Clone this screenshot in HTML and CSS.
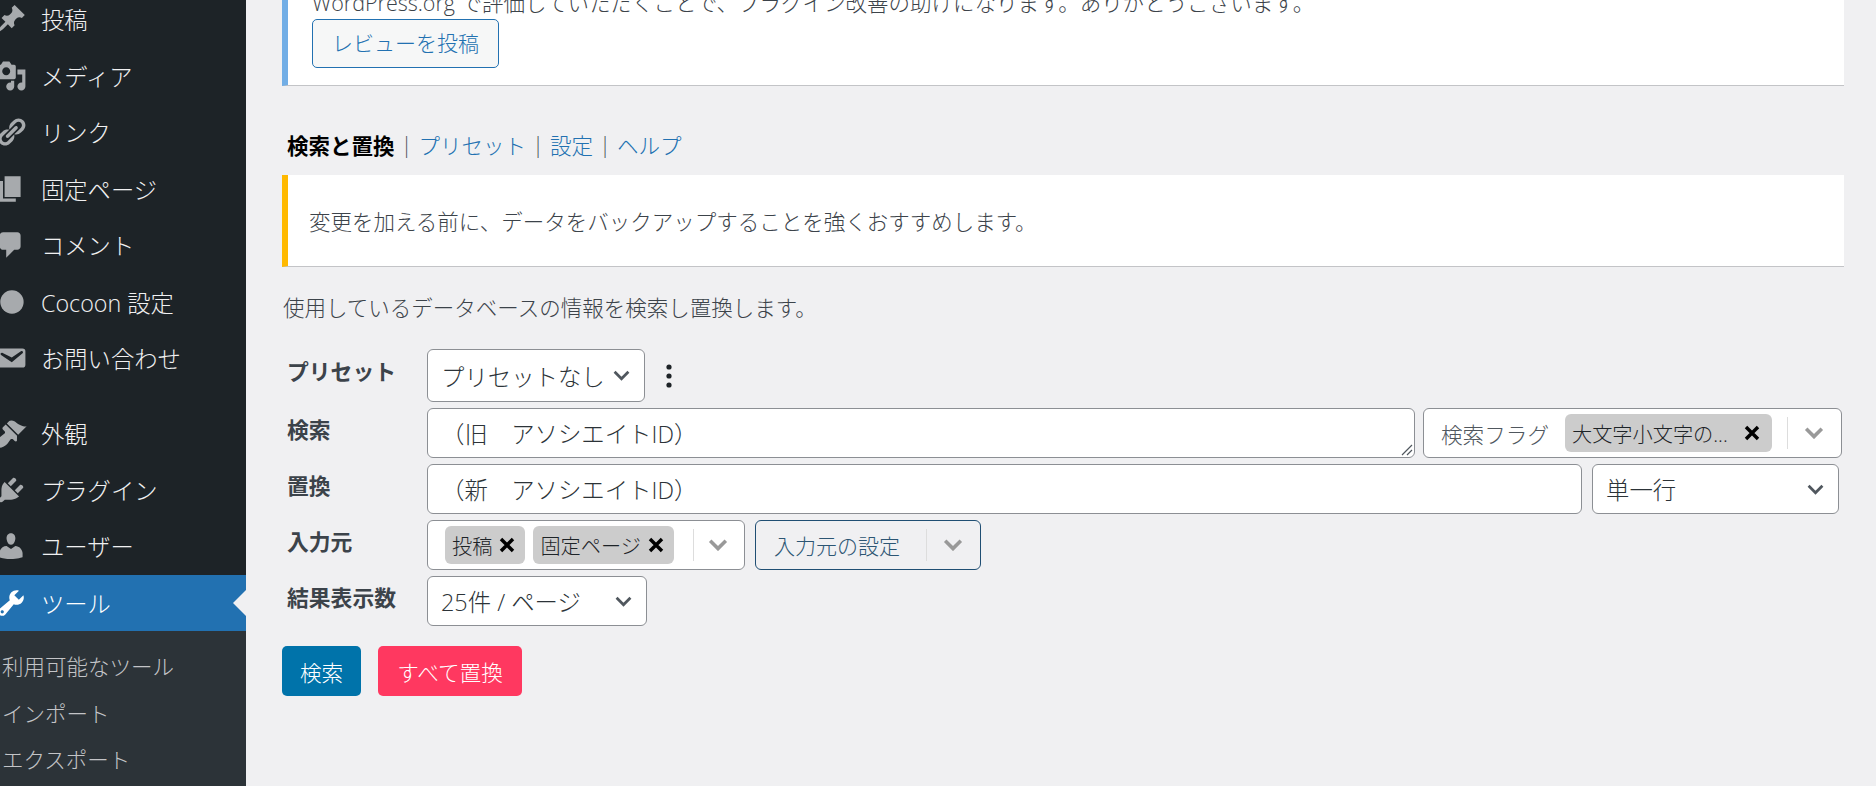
FILE: index.html
```html
<!DOCTYPE html>
<html lang="ja">
<head>
    <meta charset="UTF-8">
    <title>検索と置換</title>
    <link rel="stylesheet" href="styles.css">
</head>
<body>
    <div class="page">
        <nav class="sidebar">
            <ul class="menu">
                <li class="menu-item"><svg class="menu-icon" viewBox="0 0 20 20"><path d="M10.44 3.02l1.82-1.82 6.36 6.35-1.83 1.82c-1.05-.68-2.48-.57-3.41.36l-.75.75c-.92.93-1.04 2.35-.35 3.41l-1.83 1.82-2.41-2.41-2.8 2.79c-.42.42-3.38 2.71-3.8 2.29s1.86-3.39 2.28-3.81l2.79-2.79L4.1 9.36l1.83-1.82c1.05.69 2.48.57 3.4-.36l.75-.75c.93-.92 1.05-2.35.36-3.41z"/></svg>投稿</li>
                <li class="menu-item"><svg class="menu-icon" viewBox="0 0 20 20"><path d="M13 11V4c0-.55-.45-1-1-1h-1.67L9 1H5L3.67 3H2c-.55 0-1 .45-1 1v7c0 .55.45 1 1 1h10c.55 0 1-.45 1-1zM7 4.5c1.38 0 2.5 1.12 2.5 2.5S8.38 9.5 7 9.5 4.5 8.38 4.5 7 5.62 4.5 7 4.5zM14 6h5v10.5c0 1.38-1.12 2.5-2.5 2.5S14 17.88 14 16.5s1.12-2.5 2.5-2.5c.17 0 .34.02.5.05V9h-3V6zm-4 8.05V13h2v3.5c0 1.38-1.12 2.5-2.5 2.5S7 17.88 7 16.5 8.12 14 9.5 14c.17 0 .34.02.5.05z"/></svg>メディア</li>
                <li class="menu-item"><svg class="menu-icon" viewBox="0 0 20 20"><path d="M17.74 2.76c1.68 1.69 1.68 4.41 0 6.1l-1.53 1.52c-1.12 1.12-2.7 1.47-4.14 1.09l2.62-2.61.76-.77.76-.76c.84-.84.84-2.2 0-3.04-.84-.85-2.2-.85-3.04 0l-.77.76-3.38 3.38c-.37-1.44-.02-3.02 1.1-4.14l1.52-1.53c1.69-1.68 4.42-1.68 6.1 0zM8.59 13.43l5.34-5.34c.42-.42.42-1.1 0-1.52-.44-.43-1.13-.39-1.53 0l-5.33 5.34c-.42.42-.42 1.1 0 1.52.44.43 1.13.39 1.52 0zm-.76 2.29l4.14-4.15c.38 1.44.03 3.02-1.09 4.14l-1.52 1.53c-1.69 1.68-4.41 1.68-6.1 0-1.68-1.68-1.68-4.42 0-6.1l1.53-1.52c1.12-1.12 2.7-1.47 4.14-1.1l-4.14 4.15c-.85.84-.85 2.2 0 3.05.84.84 2.2.84 3.04 0z"/></svg>リンク</li>
                <li class="menu-item"><svg class="menu-icon" viewBox="0 0 20 20"><path d="M6 15V2h10v13H6zm-1 1h8v2H3V5h2v11z"/></svg>固定ページ</li>
                <li class="menu-item"><svg class="menu-icon" viewBox="0 0 20 20"><path d="M5 2h9c1.1 0 2 .9 2 2v7c0 1.1-.9 2-2 2h-2l-5 5v-5H5c-1.1 0-2-.9-2-2V4c0-1.1.9-2 2-2z"/></svg>コメント</li>
                <li class="menu-item"><svg class="menu-icon" viewBox="0 0 20 20"><circle cx="10.6" cy="10" r="7.3"/></svg>Cocoon 設定</li>
                <li class="menu-item"><svg class="menu-icon" viewBox="0 0 20 20"><path d="M3.87 4h13.25C18.37 4 19 4.59 19 5.79v8.42c0 1.19-.63 1.79-1.88 1.79H3.87c-1.25 0-1.88-.6-1.88-1.79V5.79c0-1.2.63-1.79 1.88-1.79zm6.62 8.6l6.74-5.53c.24-.2.43-.66.13-1.07-.29-.41-.82-.42-1.17-.17l-5.7 3.86L4.8 6.83c-.35-.25-.88-.24-1.17.17-.3.41-.11.87.13 1.07z"/></svg>お問い合わせ</li>
                <li class="menu-item menu-sep"><svg class="menu-icon" viewBox="0 0 20 20"><path d="M14.48 11.06L7.41 3.99l1.5-1.5c.5-.56 2.3-.47 3.51.32 1.21.8 1.43 1.28 2.91 2.1 1.18.64 2.45 1.26 4.45.85zm-.71.71L6.7 4.7 4.93 6.47c-.39.39-.39 1.02 0 1.41l1.06 1.06c.39.39.39 1.03 0 1.42-.6.6-1.43 1.11-2.21 1.69-.35.26-.7.53-1.01.84-1.34 1.34-2.02 3.35-2.02 4.51 0 1.16.93 2 2.03 1.82 1.16 0 3.17-.68 4.51-2.02.31-.31.58-.66.84-1.01.58-.78 1.09-1.61 1.69-2.21.39-.39 1.03-.39 1.42 0l1.06 1.06c.39.39 1.02.39 1.41 0z"/></svg>外観</li>
                <li class="menu-item"><svg class="menu-icon" viewBox="0 0 20 20"><path d="M13.11 4.36L9.87 7.6 8 5.73l3.24-3.24c.35-.34 1.05-.2 1.56.32.52.51.66 1.21.31 1.55zm-8 1.77l.91-1.12 9.01 9.01-1.19.84c-.71.71-2.63 1.16-3.82 1.16H6.14L4.9 17.26c-.59.59-1.54.59-2.12 0-.59-.58-.59-1.53 0-2.12l1.24-1.24v-3.88c0-1.13.4-3.19 1.09-3.89zm7.26 3.97l3.24-3.24c.34-.35 1.04-.21 1.55.31.52.51.66 1.21.31 1.55l-3.24 3.25z"/></svg>プラグイン</li>
                <li class="menu-item"><svg class="menu-icon" viewBox="0 0 20 20"><path d="M10 9.25c-2.27 0-2.73-3.44-2.73-3.44C7 4.02 7.82 2 9.97 2c2.16 0 2.98 2.02 2.71 3.81 0 0-.41 3.44-2.68 3.44zm0 2.57L12.72 10c2.39 0 4.52 2.33 4.52 4.53v2.49s-3.65 1.13-7.24 1.13c-3.65 0-7.24-1.13-7.24-1.13v-2.49c0-2.25 1.94-4.48 4.47-4.48z"/></svg>ユーザー</li>
                <li class="menu-item menu-item-active"><svg class="menu-icon" viewBox="0 0 20 20"><path d="M16.68 9.77c-1.34 1.34-3.3 1.67-4.95.99l-5.41 6.52c-.99.99-2.59.99-3.58 0s-.99-2.59 0-3.57l6.52-5.42c-.68-1.65-.35-3.61.99-4.95 1.28-1.28 3.12-1.62 4.72-1.06l-2.89 2.89 2.82 2.82 2.86-2.87c.53 1.58.18 3.39-1.08 4.65zM3.81 16.21c.4.39 1.04.39 1.43 0 .4-.4.4-1.04 0-1.43-.39-.4-1.03-.4-1.43 0-.39.39-.39 1.03 0 1.43z"/></svg>ツール</li>
            </ul>
            <ul class="submenu">
                <li>利用可能なツール</li>
                <li>インポート</li>
                <li>エクスポート</li>
            </ul>
        </nav>

        <main class="content">
            <div class="notice notice-review">
                <p class="notice-line">WordPress.org で評価していただくことで、プラグイン改善の助けになります。ありがとうございます。</p>
                <a class="review-button">レビューを投稿</a>
            </div>

            <div class="tabs">
                <strong class="tab-current">検索と置換</strong>
                <span class="tab-sep">|</span>
                <a class="tab-link">プリセット</a>
                <span class="tab-sep">|</span>
                <a class="tab-link">設定</a>
                <span class="tab-sep">|</span>
                <a class="tab-link">ヘルプ</a>
            </div>

            <div class="notice notice-warning">
                <p>変更を加える前に、データをバックアップすることを強くおすすめします。</p>
            </div>

            <p class="description">使用しているデータベースの情報を検索し置換します。</p>

            <div class="form">
                <div class="form-row row-preset">
                    <div class="form-label">プリセット</div>
                    <div class="field select select-preset">
                        <span class="field-text">プリセットなし</span>
                        <svg class="chevron" viewBox="0 0 16 10"><path d="M1.5 1.5L8 8l6.5-6.5"/></svg>
                    </div>
                    <svg class="dots" viewBox="0 0 6 24"><circle cx="3" cy="3" r="2.6"/><circle cx="3" cy="12" r="2.6"/><circle cx="3" cy="21" r="2.6"/></svg>
                </div>

                <div class="form-row">
                    <div class="form-label">検索</div>
                    <div class="field field-grow">
                        <span class="field-text">（旧　アソシエイトID）</span>
                        <svg class="grip" viewBox="0 0 14 14"><path d="M13 3L3 13M13 8l-5 5"/></svg>
                    </div>
                    <div class="field multi multi-flags">
                        <span class="multi-label">検索フラグ</span>
                        <span class="tag tag-wide"><span class="tag-text">大文字小文字の...</span><svg class="tag-x" viewBox="0 0 12 12"><path d="M1.5 1.5l9 9M10.5 1.5l-9 9"/></svg></span>
                        <span class="multi-divider"></span>
                        <svg class="chevron chevron-grey" viewBox="0 0 16 10"><path d="M1.5 1.5L8 8l6.5-6.5"/></svg>
                    </div>
                </div>

                <div class="form-row">
                    <div class="form-label">置換</div>
                    <div class="field field-grow">
                        <span class="field-text">（新　アソシエイトID）</span>
                    </div>
                    <div class="field select select-mode">
                        <span class="field-text">単一行</span>
                        <svg class="chevron" viewBox="0 0 16 10"><path d="M1.5 1.5L8 8l6.5-6.5"/></svg>
                    </div>
                </div>

                <div class="form-row">
                    <div class="form-label">入力元</div>
                    <div class="field multi multi-source">
                        <span class="tag"><span class="tag-text">投稿</span><svg class="tag-x" viewBox="0 0 12 12"><path d="M1.5 1.5l9 9M10.5 1.5l-9 9"/></svg></span>
                        <span class="tag"><span class="tag-text">固定ページ</span><svg class="tag-x" viewBox="0 0 12 12"><path d="M1.5 1.5l9 9M10.5 1.5l-9 9"/></svg></span>
                        <span class="multi-divider"></span>
                        <svg class="chevron chevron-grey" viewBox="0 0 16 10"><path d="M1.5 1.5L8 8l6.5-6.5"/></svg>
                    </div>
                    <div class="field multi multi-settings">
                        <span class="multi-label">入力元の設定</span>
                        <span class="multi-divider"></span>
                        <svg class="chevron chevron-grey" viewBox="0 0 16 10"><path d="M1.5 1.5L8 8l6.5-6.5"/></svg>
                    </div>
                </div>

                <div class="form-row">
                    <div class="form-label">結果表示数</div>
                    <div class="field select select-perpage">
                        <span class="field-text">25件 / ページ</span>
                        <svg class="chevron" viewBox="0 0 16 10"><path d="M1.5 1.5L8 8l6.5-6.5"/></svg>
                    </div>
                </div>
            </div>

            <div class="actions">
                <button class="btn btn-search">検索</button>
                <button class="btn btn-replace">すべて置換</button>
            </div>
        </main>
    </div>
</body>
</html>
```

FILE: styles.css
```css
html, body {
    margin: 0;
    height: 100%;
    overflow: hidden;
}
body {
    font-family: "Open Sans", "Noto Sans CJK JP", sans-serif;
    font-size: 21.5px;
    font-weight: 300;
    color: #3c434a;
    background-color: #f0f0f2;
}
p {
    margin: 0;
}
ul {
    margin: 0;
    padding: 0;
    list-style: none;
}
.page {
    display: flex;
    height: 786px;
    overflow: hidden;
}

/* sidebar */
.sidebar {
    width: 246px;
    flex: none;
    background-color: #1d2327;
    overflow: hidden;
}
.menu {
    margin-top: -9px;
}
.menu-item {
    position: relative;
    display: flex;
    align-items: center;
    gap: 14px;
    height: 56.5px;
    margin-left: -5px;
    font-size: 23.3px;
    color: #f0f0f1;
}
.menu-sep {
    margin-top: 18.5px;
}
.menu-icon {
    width: 32px;
    height: 32px;
    flex: none;
    fill: #a7aaad;
}
.menu-item-active {
    margin-left: 0;
    background-color: #2271b1;
    color: #fff;
}
.menu-item-active .menu-icon {
    margin-left: -5px;
    fill: #fff;
}
.menu-item-active::after {
    content: "";
    position: absolute;
    right: 0;
    top: 15px;
    border-style: solid;
    border-width: 13px 13px 13px 0;
    border-color: transparent #f0f0f2 transparent transparent;
}
.submenu {
    height: 200px;
    padding-top: 13px;
    padding-left: 2px;
    background-color: #2c3338;
    color: #c3c4c7;
}
.submenu li {
    height: 46.5px;
    line-height: 46.5px;
    white-space: nowrap;
}

/* main */
.content {
    flex: 1;
    min-width: 0;
    padding: 0 32px 0 36px;
}
.notice {
    background-color: #fff;
    border-left: 6px solid #72aee6;
    border-bottom: 1px solid #c3c4c7;
}
.notice-review {
    margin-top: -13px;
    padding: 0 24px 17px;
}
.notice-line {
    height: 32px;
    line-height: 32px;
    white-space: nowrap;
}
.review-button {
    display: inline-block;
    box-sizing: border-box;
    height: 49px;
    line-height: 46px;
    padding: 0 19px;
    font-size: 21px;
    color: #2271b1;
    background-color: #f6f7f7;
    border: 1.5px solid #2271b1;
    border-radius: 5px;
}
.tabs {
    display: flex;
    align-items: center;
    height: 34px;
    margin-top: 41px;
    margin-bottom: 14px;
    padding-left: 5px;
}
.tab-current {
    font-weight: 700;
    color: #000;
}
.tab-sep {
    width: 24px;
    text-align: center;
    color: #50575e;
}
.tab-link {
    color: #2271b1;
}
.notice-warning {
    display: flex;
    align-items: center;
    box-sizing: border-box;
    height: 92px;
    padding: 0 21px;
    border-left-color: #ffb900;
}
.description {
    height: 34px;
    line-height: 34px;
    margin-top: 24px;
    margin-bottom: 24px;
    padding-left: 1px;
}

/* form */
.form {
    display: flex;
    flex-direction: column;
    gap: 6px;
}
.form-row {
    display: flex;
    align-items: center;
    gap: 8px;
    height: 50px;
}
.row-preset {
    height: 53px;
}
.form-label {
    width: 135px;
    flex: none;
    margin-right: -3px;
    padding-left: 5px;
    padding-bottom: 9px;
    font-size: 21.8px;
    font-weight: 700;
    white-space: nowrap;
}
.row-preset .form-label {
    padding-bottom: 11px;
}
.field {
    position: relative;
    display: flex;
    align-items: center;
    box-sizing: border-box;
    height: 100%;
    padding: 0 14px 0 13px;
    font-size: 23.4px;
    color: #2c3338;
    background-color: #fff;
    border: 1.5px solid #8c8f94;
    border-radius: 6px;
}
.field-grow {
    flex: 1;
    min-width: 0;
}
.field-text {
    white-space: nowrap;
}
.select {
    justify-content: space-between;
    flex: none;
}
.select-preset {
    width: 218px;
}
.select-mode {
    width: 247px;
    margin-left: 2px;
    margin-right: 5px;
}
.select-perpage {
    width: 220px;
}
.chevron {
    width: 17px;
    height: 11px;
    flex: none;
    fill: none;
    stroke: #50575e;
    stroke-width: 2.6;
}
.chevron-grey {
    width: 20px;
    height: 12px;
    stroke: #999;
    stroke-width: 3;
}
.dots {
    width: 6px;
    height: 24px;
    margin-left: 13px;
    fill: #1d2327;
}
.grip {
    position: absolute;
    right: 1px;
    bottom: 1px;
    width: 14px;
    height: 14px;
    fill: none;
    stroke: #50575e;
    stroke-width: 1.2;
}
.multi {
    flex: none;
    gap: 8px;
    font-size: 21.6px;
}
.multi-flags {
    width: 419px;
    margin-right: 2px;
    padding: 0 17px;
}
.multi-source {
    width: 318px;
    padding: 0 0 0 17px;
}
.multi-settings {
    width: 226px;
    margin-left: 2px;
    padding: 0 17px 0 18px;
    color: #2c5573;
    background-color: #f0f0f2;
    border-color: #1f4e73;
}
.multi-label {
    margin-right: 8px;
    white-space: nowrap;
    color: #50575e;
}
.multi-settings .multi-label {
    font-size: 21px;
    color: #2c5573;
}
.tag {
    display: flex;
    align-items: center;
    justify-content: space-between;
    gap: 7px;
    height: 38px;
    padding: 0 10px 0 7px;
    font-size: 20.2px;
    color: #1d2327;
    background-color: #ccc;
    border-radius: 6px;
    white-space: nowrap;
}
.tag-wide {
    width: 207px;
    box-sizing: border-box;
    padding-right: 12px;
}
.tag-x {
    width: 16px;
    height: 16px;
    flex: none;
    fill: none;
    stroke: #000;
    stroke-width: 2.6;
}
.multi-divider {
    width: 1px;
    height: 32px;
    margin-left: auto;
    background-color: #ddd;
}
.multi .chevron {
    margin: 0 0 0 8px;
}
.multi-source .chevron {
    margin: 0 16px 0 6px;
}

/* buttons */
.actions {
    display: flex;
    gap: 17px;
    margin-top: 20px;
}
.btn {
    height: 50px;
    padding: 0;
    font-family: inherit;
    font-size: 21.6px;
    font-weight: 300;
    color: #fff;
    border: none;
    border-radius: 5px;
}
.btn-search {
    width: 79px;
    background-color: #0073aa;
}
.btn-replace {
    width: 144px;
    background-color: #ff3860;
}
```
